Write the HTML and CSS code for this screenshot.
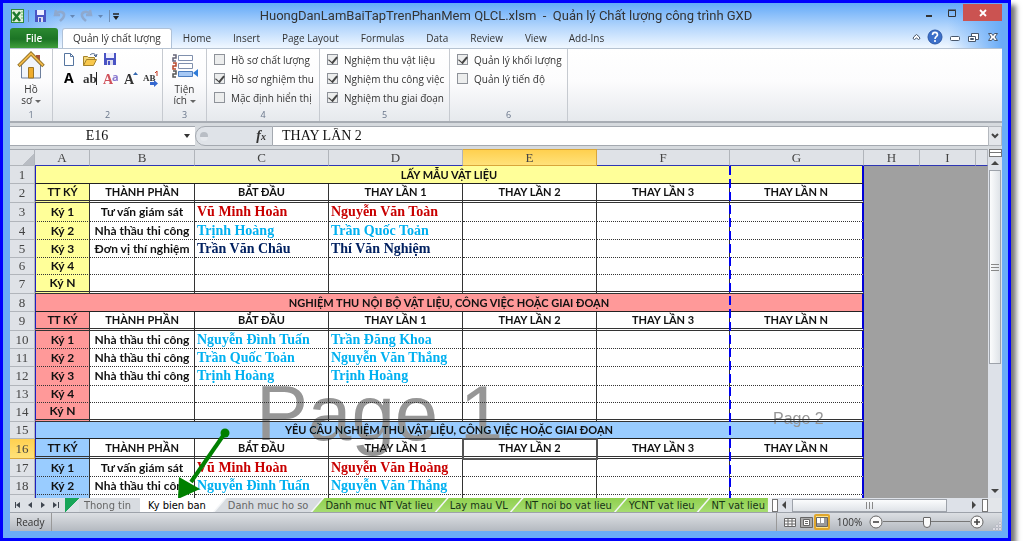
FILE: index.html
```
<!DOCTYPE html>
<html lang="vi">
<head>
<meta charset="utf-8">
<title>HuongDanLamBaiTapTrenPhanMem QLCL.xlsm - Quản lý Chất lượng công trình GXD</title>
<link rel="stylesheet" href="styles.css">
</head>
<body>
<div class="window">
  <header class="titlebar">
    <div class="quick">
      <svg width="110" height="20" viewBox="0 0 110 20">
        <rect x="1.500" y="3.500" width="12" height="13" fill="#dff0d8" stroke="#2f8a3b"/><path d="M3 6l7 9M10 6l-7 9" stroke="#1e7a2e" stroke-width="2.500"/><path d="M11 6h2M11 9h2M11 12h2" stroke="#6bb36f"/>
        <path d="M18.500 4v12" stroke="#6f8fb8"/>
        <path d="M25 4h11v12H25z" fill="#4a54c4"/><path d="M27 4h7v5h-7z" fill="#eef"/><path d="M28 11h5v5h-5z" fill="#dde"/><path d="M29 12h2v4h-2z" fill="#4a54c4"/>
        <path d="M46 4l-1 5 5 0M46 8c3-4 9-2 8 2-1 3-3 4-4 5" fill="none" stroke="#8ea9cf" stroke-width="2.500"/>
        <path d="M60 9h5l-2.500 3z" fill="#6487b5"/>
        <path d="M80 4l1 5-5 0M80 8c-3-4-9-2-8 2 1 3 3 4 4 5" fill="none" stroke="#8ea9cf" stroke-width="2.500"/>
        <path d="M88 9h5l-2.500 3z" fill="#6487b5"/>
        <path d="M99.500 4v12" stroke="#6f8fb8"/><path d="M103 8h6" stroke="#222" stroke-width="1.500"/><path d="M103 10h6l-3 4z" fill="#222"/>
      </svg>
    </div>
    <h1 class="title">HuongDanLamBaiTapTrenPhanMem QLCL.xlsm &nbsp;-&nbsp; Quản lý Chất lượng công trình GXD</h1>
    <div class="winbtns">
      <button class="winbtn" aria-label="Thu nhỏ"><svg width="10" height="10"><path d="M2 8h6" stroke="#333" stroke-width="2"/></svg></button>
      <button class="winbtn" aria-label="Phóng to"><svg width="10" height="10"><path d="M1.500 2.500h7v6h-7z M1 2h8" fill="none" stroke="#333"/></svg></button>
      <button class="winbtn close" aria-label="Đóng"><svg width="10" height="10"><path d="M2 2l6 6M8 2l-6 6" stroke="#fff" stroke-width="1.800"/></svg></button>
    </div>
  </header>

  <nav class="tabs">
    <button class="file">File</button>
    <button class="tab active">Quản lý chất lượng</button>
    <button class="tab">Home</button><button class="tab">Insert</button><button class="tab">Page Layout</button><button class="tab">Formulas</button><button class="tab">Data</button><button class="tab">Review</button><button class="tab">View</button><button class="tab">Add-Ins</button>
    <svg class="helpicons" width="92" height="18" viewBox="0 0 92 18">
      <path d="M3 10.500q0-1.500 3.500-4 3.500 2.500 3.500 4l-1.500 1-2-1.500-2 1.500z" fill="#fff" stroke="#47566b"/>
      <circle cx="25" cy="9" r="7" fill="#3b6fc9" stroke="#2c58a8"/><path d="M22.500 7c0-3.500 5-3.500 5 0 0 1.500-2.500 1.500-2.500 4M25 12v2" stroke="#fff" stroke-width="1.600" fill="none"/>
      <rect x="40.500" y="8.500" width="9" height="4" rx="1" fill="#fff" stroke="#47566b"/>
      <path d="M61.500 5.500h7v6h-7z" fill="#fff" stroke="#47566b"/><path d="M58.500 8.500h7v5h-7z M60.500 10.500h3v1h-3z" fill="#fff" stroke="#47566b"/>
      <path d="M78.500 5.500h3l1.500 2 1.500-2h3l-2.500 3.500 2.500 3.500h-3l-1.500-2-1.500 2h-3l2.500-3.500z" fill="#fff" stroke="#47566b"/>
    </svg>
  </nav>

  <section class="ribbon">
    <div class="group g1">
      <button class="big">
        <svg width="28" height="30" viewBox="0 0 28 30"><path d="M19 5h4v8h-4z" fill="#a9543e"/><path d="M4.500 15L14 5l9.500 10v13h-19z" fill="#f1f5fb" stroke="#6d7f9c"/><path d="M1.500 16L14 3.500 26.500 16" fill="none" stroke="#8a6a20" stroke-width="3.500"/><path d="M2 15.500L14 3.500 26 15.500" fill="none" stroke="#efb94a" stroke-width="1.800"/><path d="M11.500 17.500h5V28h-5z" fill="#efac2c" stroke="#9b7424"/></svg>
        <span>Hồ<br>sơ <i class="caret"></i></span>
      </button>
      <small>1</small>
    </div>
    <div class="group g2">
      <svg width="104" height="40" viewBox="0 0 104 40">
        <path d="M8.500 3.500h6l3 3v9h-9z" fill="#fff" stroke="#56759f"/><path d="M14.500 3.500v3h3" fill="none" stroke="#56759f"/>
        <path d="M27.500 15.500v-9h4l1 1h6v3" fill="#f4d778" stroke="#a5822a"/><path d="M27.500 15.500l3-6h10l-3 6z" fill="#f9c84c" stroke="#a5822a"/><path d="M34 5c2-2 5-2 6 1m-2-1l2 2 1-3" fill="none" stroke="#435d86"/>
        <path d="M48 3h12v12H48z" fill="#4a54c4"/><path d="M50 3h8v5h-8z" fill="#eef"/><path d="M51 10h6v5h-6z" fill="#dde"/><path d="M52 11h2v4h-2z" fill="#4a54c4"/>
        <text x="8" y="33" class="ia">A</text>
        <text x="27" y="33" class="ib">ab</text><path d="M40.500 22v13" stroke="#222"/>
        <text x="47" y="34" class="ic">A</text><text x="56" y="31" class="id">a</text>
        <text x="68" y="34" class="ie">A</text><path d="M77 25h5l-2.500-3z" fill="#3568b0"/>
        <text x="87" y="31" class="if">AB</text><path d="M101 21v5M99 23l2-2" stroke="#c73a22" fill="none"/><path d="M94 32h4v-2l4 3.500-4 3.500v-2h-4z" fill="#3568d0"/>
      </svg>
      <small>2</small>
    </div>
    <div class="group g3">
      <button class="big">
        <svg width="28" height="30" viewBox="0 0 28 30"><g fill="#fff" stroke="#8090ad"><path d="M7.500 5.500h14v5h-14z"/><path d="M7.500 13.500h14v5h-14z"/><path d="M7.500 21.500h14v5h-14z" fill="#a6c8f4" stroke="#4a7cc0"/></g><g fill="none" stroke-width="1.500"><path d="M2 5h3v3H2v3h3" stroke="#667"/><path d="M2 13h3v3H2v3h3" stroke="#b8482c"/><path d="M2 21h3v3H2v3h3" stroke="#555"/></g><path d="M27 19v8l-5-4z" fill="#2f7bd8"/></svg>
        <span>Tiện<br>ích <i class="caret"></i></span>
      </button>
      <small>3</small>
    </div>
    <div class="group g4">
      <div class="checks">
        <label><input type="checkbox">Hồ sơ chất lượng</label>
        <label><input type="checkbox" checked>Hồ sơ nghiệm thu</label>
        <label><input type="checkbox">Mặc định hiển thị</label>
      </div>
      <small>4</small>
    </div>
    <div class="group g5">
      <div class="checks">
        <label><input type="checkbox" checked>Nghiệm thu vật liệu</label>
        <label><input type="checkbox" checked>Nghiệm thu công việc</label>
        <label><input type="checkbox" checked>Nghiệm thu giai đoạn</label>
      </div>
      <small>5</small>
    </div>
    <div class="group g6">
      <div class="checks">
        <label><input type="checkbox" checked>Quản lý khối lượng</label>
        <label><input type="checkbox">Quản lý tiến độ</label>
      </div>
      <small>6</small>
    </div>
  </section>

  <section class="formulabar">
    <div class="namebox"><input aria-label="Name Box" value="E16"><i class="caret dark"></i></div>
    <div class="fx"><svg width="10" height="10"><circle cx="5" cy="5" r="4" fill="#b9bec5"/><path d="M1 6a4 4 0 0 0 8 0z" fill="#e6e9ed"/></svg><em>f<sub>x</sub></em></div>
    <input class="formula" aria-label="Formula" value="THAY LẦN 2">
    <button class="expand" aria-label="Mở rộng"><svg width="8" height="6"><path d="M1 1l3 3 3-3" fill="none" stroke="#444" stroke-width="2"/></svg></button>
  </section>

  <main class="workbook">
    <div class="panes">
      <div class="grid">
        <table class="sheet">
          <colgroup><col class="w-n"><col class="w-a"><col class="w-b"><col class="w-c"><col class="w-c"><col class="w-c"><col class="w-f"><col class="w-c"><col class="w-h"><col class="w-h"><col></colgroup>
          <thead><tr><th class="corner"></th><th>A</th><th>B</th><th>C</th><th>D</th><th class="sel">E</th><th>F</th><th>G</th><th>H</th><th>I</th><th></th></tr></thead>
          <tbody class="yellow">
            <tr class="h18 band"><th>1</th><td colspan="7">LẤY MẪU VẬT LIỆU</td><td class="outside" colspan="3" rowspan="19"></td></tr>
            <tr class="h19 heads"><th>2</th><td>TT KÝ</td><td>THÀNH PHẦN</td><td>BẮT ĐẦU</td><td>THAY LẦN 1</td><td>THAY LẦN 2</td><td>THAY LẦN 3</td><td>THAY LẦN N</td></tr>
            <tr class="h19"><th>3</th><td>Ký 1</td><td>Tư vấn giám sát</td><td class="name red">Vũ Minh Hoàn</td><td class="name red">Nguyễn Văn Toàn</td><td></td><td></td><td></td></tr>
            <tr class="h18"><th>4</th><td>Ký 2</td><td>Nhà thầu thi công</td><td class="name cyan">Trịnh Hoàng</td><td class="name cyan">Trần Quốc Toản</td><td></td><td></td><td></td></tr>
            <tr class="h18"><th>5</th><td>Ký 3</td><td>Đơn vị thí nghiệm</td><td class="name navy">Trần Văn Châu</td><td class="name navy">Thí Văn Nghiệm</td><td></td><td></td><td></td></tr>
            <tr class="h17"><th>6</th><td>Ký 4</td><td></td><td></td><td></td><td></td><td></td><td></td></tr>
            <tr class="h19 last"><th>7</th><td>Ký N</td><td></td><td></td><td></td><td></td><td></td><td></td></tr>
          </tbody>
          <tbody class="pink">
            <tr class="h18 band"><th>8</th><td colspan="7">NGHIỆM THU NỘI BỘ VẬT LIỆU, CÔNG VIỆC HOẶC GIAI ĐOẠN</td></tr>
            <tr class="h19 heads"><th>9</th><td>TT KÝ</td><td>THÀNH PHẦN</td><td>BẮT ĐẦU</td><td>THAY LẦN 1</td><td>THAY LẦN 2</td><td>THAY LẦN 3</td><td>THAY LẦN N</td></tr>
            <tr class="h18"><th>10</th><td>Ký 1</td><td>Nhà thầu thi công</td><td class="name cyan">Nguyễn Đình Tuấn</td><td class="name cyan">Trần Đăng Khoa</td><td></td><td></td><td></td></tr>
            <tr class="h18"><th>11</th><td>Ký 2</td><td>Nhà thầu thi công</td><td class="name cyan">Trần Quốc Toản</td><td class="name cyan">Nguyễn Văn Thắng</td><td></td><td></td><td></td></tr>
            <tr class="h19"><th>12</th><td>Ký 3</td><td>Nhà thầu thi công</td><td class="name cyan">Trịnh Hoàng</td><td class="name cyan">Trịnh Hoàng</td><td></td><td></td><td></td></tr>
            <tr class="h17"><th>13</th><td>Ký 4</td><td></td><td></td><td></td><td></td><td></td><td></td></tr>
            <tr class="h19 last"><th>14</th><td>Ký N</td><td></td><td></td><td></td><td></td><td></td><td></td></tr>
          </tbody>
          <tbody class="blue">
            <tr class="h17 band"><th>15</th><td colspan="7">YÊU CẦU NGHIỆM THU VẬT LIỆU, CÔNG VIỆC HOẶC GIAI ĐOẠN</td></tr>
            <tr class="h20 heads"><th class="sel">16</th><td>TT KÝ</td><td>THÀNH PHẦN</td><td>BẮT ĐẦU</td><td>THAY LẦN 1</td><td class="current">THAY LẦN 2</td><td>THAY LẦN 3</td><td>THAY LẦN N</td></tr>
            <tr class="h18"><th>17</th><td>Ký 1</td><td>Tư vấn giám sát</td><td class="name red">Vũ Minh Hoàn</td><td class="name red">Nguyễn Văn Hoàng</td><td></td><td></td><td></td></tr>
            <tr class="h18"><th>18</th><td>Ký 2</td><td>Nhà thầu thi công</td><td class="name cyan">Nguyễn Đình Tuấn</td><td class="name cyan">Nguyễn Văn Thắng</td><td></td><td></td><td></td></tr>
            <tr class="h3"><th></th><td></td><td></td><td></td><td></td><td></td><td></td><td></td></tr>
          </tbody>
        </table>
        <div class="watermark page1">Page 1</div>
        <div class="watermark page2">Page 2</div>
        <div class="pagebreak"></div>
      </div>
      <div class="vscroll"><span class="split"></span><i class="up"></i><span class="vthumb"><svg width="8" height="7"><path d="M0 .5h8M0 3.500h8M0 6.500h8" stroke="#888"/></svg></span><i class="down"></i></div>
    </div>
    <svg class="arrow" width="60" height="76" viewBox="0 0 60 76"><path d="M55 8L21 57" stroke="#008000" stroke-width="4"/><circle cx="55" cy="8" r="4.500" fill="#008000"/><path d="M8 74l1-22 21 12z" fill="#008000"/></svg>

    <div class="bottom">
      <svg class="navs" width="55" height="14" viewBox="0 0 55 14"><g fill="#3f4650"><path d="M5 4h1v6H5zM10 4v6L6 7zM22 4v6l-4-3zM31 4v6l4-3zM43 4v6l4-3zM48 4h1v6h-1z"/></g></svg>
      <span class="greencorner"></span>
      <div class="sheettabs">
        <button class="st gray first">Thong tin</button><button class="st on">Ky bien ban</button><button class="st gray">Danh muc ho so</button><button class="st green">Danh muc NT Vat lieu</button><button class="st green">Lay mau VL</button><button class="st green">NT noi bo vat lieu</button><button class="st green">YCNT vat lieu</button><button class="st green end">NT vat lieu</button>
      </div>
      <div class="hscroll"><span class="grip"></span><i class="left"></i><span class="hthumb"><svg width="7" height="7"><path d="M.5 0v7M3.500 0v7M6.500 0v7" stroke="#888"/></svg></span><span class="space"></span><i class="right"></i><span class="grip"></span></div>
      <span class="box"></span>
    </div>
  </main>

  <footer class="status">
    <span class="ready">Ready</span>
    <div class="zoom">
      <button class="view" aria-label="Normal"><svg width="12" height="10"><path d="M.5 1.500h11v8H.5zM0 4h12M0 7h12M4 1v9M8 1v9" fill="#fff" stroke="#666"/></svg></button>
      <button class="view" aria-label="Page Layout"><svg width="13" height="11"><path d="M.5.5h12v10H.5z" fill="#aaa" stroke="#666"/><path d="M3.500 2.500h6v6h-6zM5 4.500h3M5 6.500h3" fill="#fff" stroke="#666"/></svg></button>
      <button class="view picked" aria-label="Page Break Preview"><svg width="12" height="10"><path d="M.5.5h11v9H.5z" fill="#999" stroke="#666"/><path d="M1 1h3v5H1zM5 1h3v5H5z" fill="#fff"/></svg></button>
      <label class="pct" for="zoom">100%</label>
      <button class="round" aria-label="Zoom out"><svg width="14" height="14"><circle cx="7" cy="7" r="6" fill="#fafafa" stroke="#666"/><path d="M4 7h6" stroke="#444" stroke-width="1.600"/></svg></button>
      <input id="zoom" type="range" min="0" max="100" value="50">
      <button class="round" aria-label="Zoom in"><svg width="14" height="14"><circle cx="7" cy="7" r="6" fill="#fafafa" stroke="#666"/><path d="M4 7h6M7 4v6" stroke="#444" stroke-width="1.600"/></svg></button>
      <svg class="resize" width="10" height="10"><g fill="#fff" stroke="#aab"><path d="M7 1h2v2H7zM4 4h2v2H4zM7 4h2v2H7zM1 7h2v2H1zM4 7h2v2H4zM7 7h2v2H7z" stroke-width=".5"/></g></svg>
    </div>
  </footer>
</div>
</body>
</html>
```
FILE: styles.css
```
* { box-sizing: border-box; }
body { margin: 0; background: #fff; font: 10px/12px "Open Sans", "Noto Sans", sans-serif; color: #333; overflow: hidden; }
button { font: inherit; color: inherit; background: none; border: 0; padding: 0; margin: 0; }
input { margin: 0; border: 0; padding: 0; }
svg { display: block; flex: none; }
i { display: inline-block; width: 0; height: 0; flex: none; }

.window {
  margin-right: 13px; border: 3px solid #0000fe; padding: 0 6px 7px 7px;
  background: linear-gradient(90deg, #6aacf7 7px, transparent 60px calc(100% - 60px), #6aacf7 calc(100% - 6px)), linear-gradient(#62a9f8, #b4d6fc 24px, #eef6ff 44px, #eef6ff 45px, #6aacf7 46px);
  box-shadow: 5px 5px 5px #777;
}

/* title bar */
.titlebar { height: 25px; display: grid; grid-template-columns: 1fr auto 1fr; }
.quick { padding-top: 3px; }
.title { margin: 0; font-family: Roboto, "Open Sans", sans-serif; font-size: 13px; font-weight: 400; line-height: 25px; white-space: nowrap; }
.winbtns { display: flex; justify-content: flex-end; align-items: flex-start; padding-top: 1px; }
.winbtn { width: 23px; height: 17px; display: flex; align-items: center; justify-content: center; }
.close { width: 39px; background: #cb5351; }

/* ribbon tabs */
.tabs { height: 20px; display: flex; align-items: stretch; }
.file { width: 48px; margin-right: 4px; border-radius: 3px 3px 0 0; color: #fff; font-weight: 600; background: linear-gradient(#2c8a31, #1c7425 55%, #3f9f3c); }
.tab { padding: 0 11px; white-space: nowrap; }
.tab.active { padding: 0 10px 2px; border: 1px solid #b0c2d8; border-bottom: 0; border-radius: 3px 3px 0 0; background: #fff; }
.helpicons { margin-left: auto; }

/* ribbon */
.ribbon { height: 75px; display: flex; background: linear-gradient(#fff, #fcfcfd 45%, #e6e9ed); border-top: 1px solid #b6c3d2; border-bottom: 2px solid #a8adb4; }
.group { display: flex; flex-direction: column; justify-content: space-between; align-items: center; border-right: 1px solid #c6cad0; padding: 1px 0 0; }
.group small { font-size: 9px; line-height: 12px; color: #68758a; }
.g1 { width: 43px; } .g2 { width: 110px; } .g3 { width: 44px; } .g4 { width: 113px; } .g5 { width: 130px; } .g6 { width: 118px; }
.g4, .g5, .g6 { align-items: stretch; text-align: center; }
.ia { font: bold 14px "Open Sans", sans-serif; fill: #000; }
.ib { font: bold 13px "Liberation Serif", serif; fill: #333; }
.ic { font: bold 14px "Liberation Serif", serif; fill: #d0525c; }
.id { font: bold 11px "Open Sans", sans-serif; fill: #8a7ad0; }
.ie { font: bold 14px "Liberation Serif", serif; fill: #333; }
.if { font: bold 9px "Liberation Serif", serif; fill: #333; }
.big { display: flex; flex-direction: column; align-items: center; line-height: 11px; }
.big svg { margin-bottom: 4px; }
.caret { border: 3px solid transparent; border-top-color: #666; border-bottom: 0; vertical-align: middle; }
.caret.dark { border-top-color: #333; border-top-width: 4px; }
.checks { display: flex; flex-direction: column; padding-left: 7px; }
.checks label { display: flex; align-items: center; gap: 6px; height: 19px; white-space: nowrap; }
.checks input { appearance: none; width: 11px; height: 11px; border: 1px solid #8e9299; background: #eceded; display: flex; justify-content: center; align-items: flex-start; }
.checks input:checked::after { content: ""; width: 4px; height: 7px; border: solid #444; border-width: 0 2px 1px 0; transform: rotate(40deg); }

/* formula bar */
.formulabar { height: 26px; display: flex; padding: 3px 0; background: #d6dade; }
.formulabar input { font: 14px "Liberation Serif", serif; color: #111; background: #fff; }
.namebox { width: 185px; display: flex; align-items: center; background: #fff; border: solid #a4a9b0; border-width: 1px 0; padding-right: 5px; }
.namebox input { width: 168px; flex: 1; text-align: center; }
.fx { width: 78px; display: flex; justify-content: space-between; align-items: center; padding: 0 6px 0 3px; border: 1px solid #a4a9b0; border-radius: 10px 0 0 10px; background: #dfe3e8; }
.fx em { font: italic bold 14px/14px "Liberation Serif", serif; }
.fx sub { font-size: 10px; line-height: 0; vertical-align: baseline; }
.formula { flex: 1; min-width: 0; border: solid #a4a9b0 !important; border-width: 1px 0 !important; padding-left: 9px !important; }
.expand { width: 14px; display: flex; align-items: center; justify-content: center; border: 1px solid #b4b8be; background: #e3e6ea; }

/* sheet */
.workbook { position: relative; }
.panes { display: flex; }
.grid { flex: 1; min-width: 0; position: relative; overflow: hidden; background: #a0a0a0; }
.sheet { width: 100%; table-layout: fixed; border-spacing: 0; font: bold 12px/14px Lato, "Noto Sans", sans-serif; color: #111; }
.w-n { width: 25px; } .w-a { width: 55px; } .w-b { width: 105px; } .w-c { width: 134px; } .w-f { width: 133px; } .w-h { width: 56px; }
.sheet th { padding: 0; font: 13px/14px "Liberation Serif", serif; color: #444; background: #dfe2e7; border: solid #b1b5bb; border-width: 0 1px 1px 0; }
.sheet thead th { height: 17px; border-top: 1px solid #a4a9b0; border-bottom-color: #2e36b4; }
.sheet th.corner { background: linear-gradient(135deg, #dfe2e7 70%, #b9bdc4 70%); border-bottom-color: #b1b5bb; }
.sheet th.sel { background: linear-gradient(#ffd04f, #ffe27a); border-color: #d9a63a; }
.sheet td { padding: 0; text-align: center; white-space: nowrap; background: #fff; border-right: 1px solid #333; border-bottom: 1px dotted #333; }
.sheet td:nth-child(2) { border-left: 1px solid #2020c0; }
.sheet td:nth-child(8), .sheet .band td:nth-child(2) { border-right: 2px solid #0000d8; }
.sheet .band td { border-bottom: 1px solid #222; font-size: 11px; }
.sheet .heads td { font-size: 11px; }
.sheet .heads td, .sheet .last td { border-bottom: 3px double #333; }
.sheet td.name { padding-left: 2px; text-align: left; font: bold 14px/14px "Liberation Serif", serif; }
.sheet td.outside { background: #a0a0a0; border: 0; }
.yellow .band td:nth-child(2), .yellow td:nth-child(2) { background: #ffff99; }
.pink td:nth-child(2) { background: #ff9999; }
.blue td:nth-child(2) { background: #99ccff; }
.sheet td.current { outline: 2px solid #555; outline-offset: -1px; }
.sheet td.red { color: #c80000; } .sheet td.cyan { color: #00b0f0; } .sheet td.navy { color: #002060; }
.h17 { height: 17px; } .h18 { height: 18px; } .h19 { height: 19px; } .h20 { height: 20px; } .h3 { height: 3px; }
.h3 td, .h3 th { border-bottom: 0 !important; line-height: 3px; }
.watermark { position: absolute; font-family: "Liberation Sans", Arial, sans-serif; line-height: 1; color: #969696; mix-blend-mode: darken; white-space: nowrap; }
.page1 { left: 246px; top: 225px; font-size: 78px; }
.page2 { left: 763px; top: 262px; font-size: 16px; }
.pagebreak { position: absolute; left: 719px; top: 17px; bottom: 0; width: 2px; background: repeating-linear-gradient(#0000f0 0 9px, transparent 9px 13px); }
.arrow { position: absolute; left: 160px; top: 276px; }

/* scrollbars */
.vscroll { width: 14px; display: flex; flex-direction: column; align-items: center; background: #dde1e8; }
.split { width: 13px; height: 8px; border: 1px solid #777; background: linear-gradient(#fff 2px, #777 2px 3px, #fff 3px); }
.up { border: 4px solid transparent; border-bottom-color: #444; border-top: 0; margin: 4px 0 5px; }
.down { border: 4px solid transparent; border-top-color: #444; border-bottom: 0; margin: auto 0 5px; }
.vthumb { width: 12px; height: 194px; display: flex; align-items: center; justify-content: center; border: 1px solid #9da2aa; background: linear-gradient(90deg, #fbfcfd, #dfe3e8); }
.bottom { height: 14px; display: flex; background: #dde1e6; font: 11px/13px "DejaVu Sans Condensed", "DejaVu Sans", sans-serif; }
.greencorner { width: 14px; flex: none; background: linear-gradient(135deg, #18a558 50%, transparent 52%); }
.sheettabs { flex: 1; min-width: 0; display: flex; overflow: hidden; background: #f4f6f8; }
.st { flex: none; height: 14px; white-space: nowrap; padding: 0 14px 0 13px; margin-left: -10px; clip-path: polygon(12px 0, 100% 0, calc(100% - 12px) 100%, 0 100%); }
.st.gray { color: #666; background: #d8dce1; }
.st.green { color: #163316; background: linear-gradient(#8fd04f, #a6dc70); }
.st.first { margin-left: 0; padding: 0 9px 0 5px; clip-path: none; }
.st.on { margin-left: 0; padding: 0 19px 0 8px; background: #fff; color: #000; clip-path: polygon(0 0, 100% 0, calc(100% - 12px) 100%, 0 100%); }
.st.end { padding-right: 3px; clip-path: polygon(12px 0, 100% 0, 100% 100%, 0 100%); }
.hscroll { width: 216px; flex: none; display: flex; align-items: center; background: #dde1e8; }
.grip { width: 6px; height: 13px; border: 1px solid #777; background: #fff; }
.left { border: 4px solid transparent; border-right-color: #444; border-left: 0; margin: 0 6px 0 4px; }
.right { border: 4px solid transparent; border-left-color: #444; border-right: 0; margin-right: 6px; }
.hthumb { width: 155px; height: 13px; display: flex; align-items: center; justify-content: center; border: 1px solid #9da2aa; background: linear-gradient(#fbfcfd, #dfe3e8); }
.space { flex: 1; }
.box { width: 14px; flex: none; background: #e3e6ea; }

/* status bar */
.status { height: 19px; display: flex; justify-content: space-between; align-items: stretch; background: linear-gradient(#dcdfe3, #b4b9c0); border-top: 1px solid #9da2aa; }
.ready { width: 42px; padding-left: 6px; line-height: 18px; border-right: 1px solid #999; }
.zoom { display: flex; align-items: center; border-left: 1px solid #999; padding-left: 5px; }
.view { width: 16px; height: 16px; display: flex; align-items: center; justify-content: center; }
.picked { border: 2px solid #e0a62c; background: #ffe488; border-radius: 2px; }
.pct { width: 39px; text-align: center; }
.round { width: 14px; height: 14px; }
.zoom input { appearance: none; width: 87px; height: 14px; background: linear-gradient(transparent 6px, #777 6px 7px, transparent 7px); }
.zoom input::-webkit-slider-thumb { appearance: none; width: 8px; height: 11px; background: #fafafa; border: 1px solid #666; border-radius: 1px 1px 4px 4px; }
.resize { margin-left: 8px; align-self: flex-end; }
```
